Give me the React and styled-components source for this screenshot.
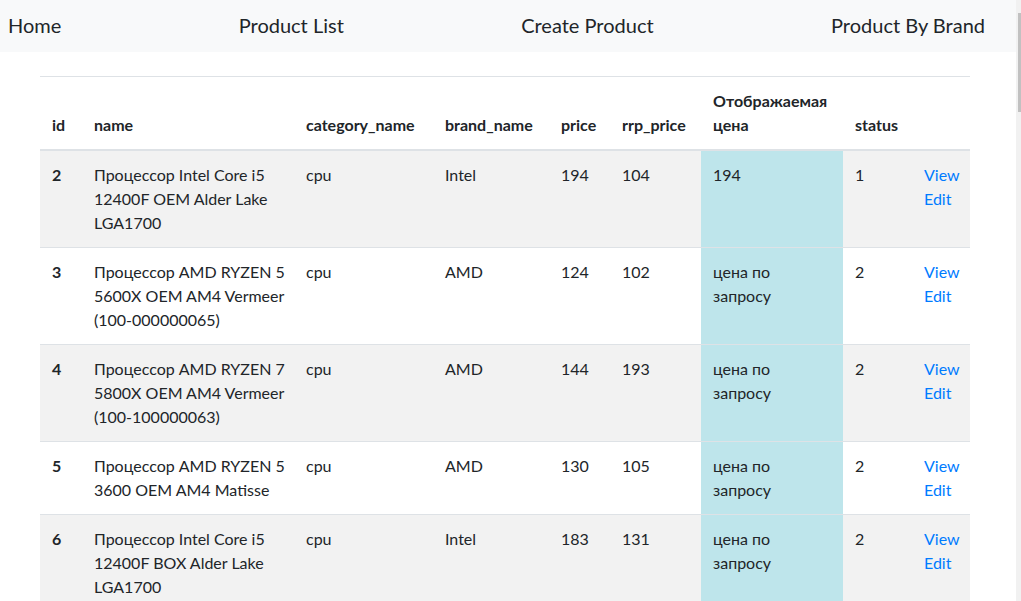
import styled, { createGlobalStyle } from "styled-components";

const GlobalStyle = createGlobalStyle`
  body {
    margin: 0;
    font-family: Lato, "Open Sans", sans-serif;
    font-size: 16px;
    line-height: 24px;
    color: #212529;
    background: #fff;
  }
`;

const Page = styled.div`
  display: flex;
  height: 601px;
  overflow: hidden;
`;

const Content = styled.div`
  flex: 1;
  min-width: 0;
`;

const ScrollTrack = styled.div`
  width: 5px;
  flex-shrink: 0;
  background: #f1f1f1;
  padding: 13px 0 0 2px;
  box-sizing: border-box;
`;

const ScrollThumb = styled.div`
  height: 99px;
  background: #c1c1c1;
`;

const NavBar = styled.nav`
  height: 52px;
  box-sizing: border-box;
  padding: 0 31px 3px 8px;
  background: #f8f9fa;
  display: flex;
  align-items: center;
  justify-content: space-between;
`;

const NavLink = styled.a`
  font-size: 20px;
  color: #212529;
  text-decoration: none;
  cursor: pointer;
`;

const Main = styled.main`
  padding: 24px 0 0 40px;
`;

const Table = styled.table`
  width: 930px;
  border-collapse: collapse;
  table-layout: fixed;
  border-top: 1px solid #dee2e6;
`;

const Th = styled.th`
  text-align: left;
  vertical-align: bottom;
  padding: 12px;
  font-weight: 700;
  border-bottom: 2px solid #dee2e6;
`;

const Row = styled.tr`
  background: ${(p) => (p.$striped ? "#f2f2f2" : "#fff")};
`;

const Td = styled.td`
  vertical-align: top;
  padding: 12px ${(p) => (p.$wide ? "4px" : "12px")} 12px 12px;
  border-top: 1px solid #dee2e6;
  font-weight: ${(p) => (p.$bold ? 700 : 400)};
  background: ${(p) => (p.$info ? "#bee5eb" : "transparent")};
`;

const ActionLink = styled.a`
  display: block;
  color: #007bff;
  text-decoration: none;
  cursor: pointer;
`;

const columns = [
  { key: "id", label: "id", width: 42 },
  { key: "name", label: "name", width: 212 },
  { key: "category", label: "category_name", width: 139 },
  { key: "brand", label: "brand_name", width: 116 },
  { key: "price", label: "price", width: 61 },
  { key: "rrp", label: "rrp_price", width: 91 },
  { key: "shown", label: "Отображаемая цена", width: 142 },
  { key: "status", label: "status", width: 69 },
  { key: "actions", label: "", width: 58 },
];

const products = [
  { id: 2, name: "Процессор Intel Core i5 12400F OEM Alder Lake LGA1700", category: "cpu", brand: "Intel", price: 194, rrp: 104, shown: "194", status: 1 },
  { id: 3, name: "Процессор AMD RYZEN 5 5600X OEM AM4 Vermeer (100-000000065)", category: "cpu", brand: "AMD", price: 124, rrp: 102, shown: "цена по запросу", status: 2 },
  { id: 4, name: "Процессор AMD RYZEN 7 5800X OEM AM4 Vermeer (100-100000063)", category: "cpu", brand: "AMD", price: 144, rrp: 193, shown: "цена по запросу", status: 2 },
  { id: 5, name: "Процессор AMD RYZEN 5 3600 OEM AM4 Matisse", category: "cpu", brand: "AMD", price: 130, rrp: 105, shown: "цена по запросу", status: 2 },
  { id: 6, name: "Процессор Intel Core i5 12400F BOX Alder Lake LGA1700", category: "cpu", brand: "Intel", price: 183, rrp: 131, shown: "цена по запросу", status: 2 },
];

export default function App() {
  return (
    <Page>
      <GlobalStyle />
      <Content>
        <NavBar>
          <NavLink>Home</NavLink>
          <NavLink>Product List</NavLink>
          <NavLink>Create Product</NavLink>
          <NavLink>Product By Brand</NavLink>
        </NavBar>
        <Main>
          <Table>
            <colgroup>
              {columns.map((c) => (
                <col key={c.key} style={{ width: c.width }} />
              ))}
            </colgroup>
            <thead>
              <tr>
                {columns.map((c) => (
                  <Th key={c.key}>{c.label}</Th>
                ))}
              </tr>
            </thead>
            <tbody>
              {products.map((p, i) => (
                <Row key={p.id} $striped={i % 2 === 0}>
                  <Td $bold>{p.id}</Td>
                  <Td $wide>{p.name}</Td>
                  <Td>{p.category}</Td>
                  <Td>{p.brand}</Td>
                  <Td>{p.price}</Td>
                  <Td>{p.rrp}</Td>
                  <Td $info>{p.shown}</Td>
                  <Td>{p.status}</Td>
                  <Td>
                    <ActionLink>View</ActionLink>
                    <ActionLink>Edit</ActionLink>
                  </Td>
                </Row>
              ))}
            </tbody>
          </Table>
        </Main>
      </Content>
      <ScrollTrack>
        <ScrollThumb />
      </ScrollTrack>
    </Page>
  );
}
